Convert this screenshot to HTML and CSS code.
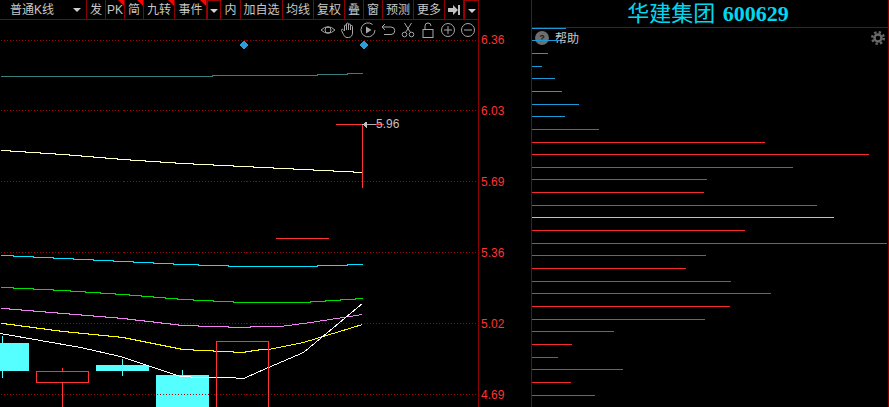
FILE: index.html
```html
<!DOCTYPE html>
<html lang="zh-CN">

<head>
    <meta charset="UTF-8">
    <title>华建集团 600629</title>
    <link rel="stylesheet" href="styles.css">
</head>

<body>
    <div class="screen">
        <!-- K line side -->
        <div class="kline">
            <div class="toolbar">
                <div class="tool tool-period">普通K线<i class="caret"></i></div>
                <div class="tool w19">发</div>
                <div class="tool w19 flag">PK</div>
                <div class="tool w19 flag">简</div>
                <div class="tool w31 flag">九转</div>
                <div class="tool w32 flag">事件</div>
                <div class="tool tool-drop w14"><i class="caret"></i></div>
                <div class="tool w20">内</div>
                <div class="tool w42">加自选</div>
                <div class="tool w31">均线</div>
                <div class="tool w31">复权</div>
                <div class="tool w19">叠</div>
                <div class="tool w19">窗</div>
                <div class="tool w31">预测</div>
                <div class="tool w31">更多</div>
                <div class="tool w19">
                    <svg width="14" height="12" viewBox="0 0 14 12">
                        <path class="fill-gray" d="M1 4H6V1L11 6L6 11V8H1ZM11 1H13V11H11Z" />
                    </svg>
                </div>
                <div class="tool tool-drop w15"><i class="caret"></i></div>
            </div>

            <div class="chart">
                <svg class="plot" width="478" height="387" viewBox="0 20 478 387">
                    <!-- filled candle bodies -->
                    <rect class="candle-up" x="0" y="343" width="29" height="28" />
                    <rect class="candle-up" x="96" y="365" width="53" height="6" />
                    <rect class="candle-up" x="156" y="375" width="53" height="32" />

                    <g transform="translate(.5 .5)">
                        <!-- grid -->
                        <path class="grid" d="M0 40H478M0 110H478M0 181H478M0 252H478M0 323H478M0 394H478" />

                        <!-- moving averages -->
                        <path class="ma ma-teal" d="M0 76H212V75H317V74H347V73H362" />
                        <path class="ma ma-cream" d="M0 150H10V151H25V152H40V153H55V154H69V155H81V156H93V157H105V158H117V159H130V160H145V161H160V162H175V163H193V164H213V165H233V166H253V167H273V168H293V169H313V170H333V171H353V172H362" />
                        <path class="ma ma-cyan" d="M0 255H13V256H33V257H53V258H73V259H93V260H113V261H133V262H153V263H173V264H198V265H228V266H317V265H347V264H362" />
                        <path class="ma ma-green" d="M0 287H13V288H33V289H53V290H70V291H85V292H100V293H115V294H129V295H141V296H153V297H165V298H177V299H193V300H213V301H233V302H310V301H325V300H340V299H355V298H362" />
                        <path class="ma ma-pink" d="M0 308H9V309H21V310H33V311H45V312H57V313H69V314H81V315H93V316H105V317H117V318H127V319H135V320H144V321H153V322H161V323H170V324H178V325H198V326H228V327H250V326H280L310 322L362 314" />
                        <path class="ma ma-yellow" d="M0 323H6V324H14V325H21V326H29V327H36V328H44V329H51V330H59V331H68V332H78V333H88V334H98V335H108V336H118V337H125V338H130V339H135V340H140V341H145V342H150V343H155V344H160V345H165V346H170V347H175V348H180V349H193V350H213V351H233V352H245V351H251V350H258V349H268L303 342L362 324" />
                        <path class="ma ma-white" d="M0 333L80 347L120 356L180 376L200 377H228L243 378L268 367L303 352L362 303" />

                        <!-- wicks and hollow candles -->
                        <path class="wick-up" d="M2 335V377M122 358V375M182 369V375" />
                        <path class="wick-down" d="M62 367V371M62 382V407" />
                        <rect class="candle-down" x="36" y="371" width="52" height="11" />
                        <rect class="candle-down" x="216" y="341" width="52" height="70" />
                        <path class="wick-down" d="M275.500 238H328.500M335.500 124H383M362 124V187" />

                        <!-- high mark -->
                        <path class="mark-line" d="M363 124H375" />
                        <path class="fill-gray" d="M362 124L366 121V127Z" />

                        <!-- diamonds -->
                        <path class="diamond" d="M243 40L247.500 44.500L243 49L238.500 44.500Z" />
                        <path class="diamond" d="M363 40L367.500 44.500L363 49L358.500 44.500Z" />
                    </g>
                    <text class="mark-text" x="376" y="128">5.96</text>
                </svg>

                <!-- drawing tools over the chart -->
                <div class="chart-tools">
                    <svg class="ico" viewBox="0 0 16 16">
                        <path d="M1 8Q8 1.500 15 8Q8 14.500 1 8Z" />
                        <circle cx="8" cy="8" r="3" />
                    </svg>
                    <svg class="ico" viewBox="0 0 16 16">
                        <path d="M4.500 9V4a1 1 0 0 1 2 0V8M6.500 8V2a1 1 0 0 1 2 0V8M8.500 8V3a1 1 0 0 1 2 0V8M10.500 8V4.500a1 1 0 0 1 2 0V11c0 2.500-1.500 4.500-4 4.500H7c-1.500 0-2.500-1-3.500-3L1.500 8.500c-.6-1 .8-1.800 1.500-1L4.500 9" />
                    </svg>
                    <svg class="ico" viewBox="0 0 16 16">
                        <path d="M12.500 2.500A7 7 0 1 0 15 8" />
                        <path class="solid" d="M6 4.500L11.500 8L6 11.500Z" />
                    </svg>
                    <svg class="ico" viewBox="0 0 16 16">
                        <path d="M5 2L2 5L5 8M2 5H11a3.500 3.500 0 0 1 0 7.500H4" />
                    </svg>
                    <svg class="ico" viewBox="0 0 16 16">
                        <circle cx="4.500" cy="12.500" r="2.300" />
                        <circle cx="11.500" cy="12.500" r="2.300" />
                        <path d="M5.500 10.500L11.500 1M10.500 10.500L4.500 1" />
                    </svg>
                    <svg class="ico" viewBox="0 0 16 16">
                        <rect x="3" y="7.500" width="10" height="8" />
                        <path d="M5 7.500V4a3 3 0 0 1 6 0" />
                    </svg>
                    <svg class="ico" viewBox="0 0 16 16">
                        <circle cx="8" cy="8" r="6.500" />
                        <path d="M4 8H12M8 4V12" />
                    </svg>
                    <svg class="ico" viewBox="0 0 16 16">
                        <circle cx="8" cy="8" r="6.500" />
                        <path d="M4 8H12" />
                    </svg>
                </div>
            </div>
        </div>

        <!-- price axis -->
        <div class="axis">
            <div class="price">6.36</div>
            <div class="price">6.03</div>
            <div class="price">5.69</div>
            <div class="price">5.36</div>
            <div class="price">5.02</div>
            <div class="price">4.69</div>
        </div>

        <!-- chip distribution -->
        <div class="panel">
            <div class="panel-title">华建集团 <span class="code">600629</span></div>
            <div class="panel-body">
                <div class="help-row">
                    <div class="help-icon">?</div>
                    <span class="help-text">帮助</span>
                    <svg class="gear" width="14" height="14" viewBox="0 0 14 14">
                        <circle class="gear-ring" cx="7" cy="7" r="3.500" />
                        <circle class="gear-teeth" cx="7" cy="7" r="5.800" />
                    </svg>
                </div>
                <div class="bars">
                    <div class="bar blue" style="width:34px"></div>
                    <div class="bar blue" style="width:28px"></div>
                    <div class="bar blue" style="width:16px"></div>
                    <div class="bar blue" style="width:10px"></div>
                    <div class="bar blue" style="width:23px"></div>
                    <div class="bar blue" style="width:30px"></div>
                    <div class="bar blue" style="width:47px"></div>
                    <div class="bar blue" style="width:33px"></div>
                    <div class="bar red" style="width:67px"></div>
                    <div class="bar red" style="width:233px"></div>
                    <div class="bar red" style="width:337px"></div>
                    <div class="bar red" style="width:261px"></div>
                    <div class="bar red" style="width:175px"></div>
                    <div class="bar red" style="width:172px"></div>
                    <div class="bar red" style="width:285px"></div>
                    <div class="bar gray" style="width:302px"></div>
                    <div class="bar red" style="width:213px"></div>
                    <div class="bar red" style="width:355px"></div>
                    <div class="bar red" style="width:174px"></div>
                    <div class="bar red" style="width:154px"></div>
                    <div class="bar red" style="width:199px"></div>
                    <div class="bar red" style="width:239px"></div>
                    <div class="bar red" style="width:198px"></div>
                    <div class="bar red" style="width:173px"></div>
                    <div class="bar red" style="width:82px"></div>
                    <div class="bar red" style="width:40px"></div>
                    <div class="bar red" style="width:26px"></div>
                    <div class="bar red" style="width:91px"></div>
                    <div class="bar red" style="width:39px"></div>
                    <div class="bar red" style="width:63px"></div>
                </div>
            </div>
        </div>
    </div>
</body>

</html>
```

FILE: styles.css
```css
/* page */
body {
    margin: 0;
    background: #000000;
    color: #c8c8c8;
    font-family: "Liberation Sans", "Noto Sans CJK SC", sans-serif;
    font-size: 12px;
    overflow: hidden;
}

.screen {
    display: flex;
    width: 889px;
    height: 407px;
}

/* left side */
.kline {
    width: 478px;
    border-right: 1px solid #8b0000;
    display: flex;
    flex-direction: column;
}

/* toolbar */
.toolbar {
    display: flex;
    height: 19px;
    border-bottom: 1px solid #8b0000;
}

.tool {
    position: relative;
    box-sizing: border-box;
    flex: none;
    display: flex;
    align-items: center;
    justify-content: center;
    height: 19px;
    padding-top: 1px;
    border-right: 1px solid #8b0000;
    line-height: 19px;
}

.tool-period {
    width: 87px;
    justify-content: flex-start;
    padding-left: 10px;
}

.tool-period .caret {
    margin-left: 19px;
}

.tool-drop {
    border: 1px solid #a00000;
    border-bottom: none;
}

.w14 { width: 14px; }
.w15 { width: 15px; border-right: none; }
.w19 { width: 19px; }
.w20 { width: 20px; }
.w31 { width: 31px; }
.w32 { width: 32px; }
.w42 { width: 42px; }

/* little white arrow */
.caret {
    width: 0;
    height: 0;
    border-left: 4px solid transparent;
    border-right: 4px solid transparent;
    border-top: 4px solid #d0d0d0;
}

/* red corner */
.flag::after {
    content: "";
    position: absolute;
    top: 0;
    right: 0;
    border-top: 6px solid #ff0000;
    border-left: 6px solid transparent;
}

/* chart */
.chart {
    position: relative;
    flex: 1;
}

.plot {
    display: block;
}

.plot path,
.plot rect {
    shape-rendering: crispEdges;
}

.grid {
    fill: none;
    stroke: #a00000;
    stroke-dasharray: 1 2;
}

.ma {
    fill: none;
    stroke-width: 1;
}

.ma-teal { stroke: #3a7f80; }
.ma-cream { stroke: #ffffc0; }
.ma-cyan { stroke: #00e5ff; }
.ma-green { stroke: #00e000; }
.ma-pink { stroke: #f080f0; }
.ma-yellow { stroke: #ffff00; }
.ma-white { stroke: #ffffff; }

.candle-up { fill: #55ffff; }
.wick-up { fill: none; stroke: #55ffff; }
.candle-down { fill: none; stroke: #ff3333; }
.wick-down { fill: none; stroke: #ff3333; }

.mark-line {
    fill: none;
    stroke: #b0b0b0;
}

.mark-text {
    fill: #c0c0c0;
    font-size: 12px;
}

.fill-gray { fill: #c0c0c0; }

.diamond { fill: #2a9fd6; }

/* icons on the chart */
.chart-tools {
    position: absolute;
    top: 2px;
    right: 0;
    display: flex;
}

.ico {
    width: 16px;
    height: 16px;
    padding: 0 2px;
    fill: none;
    stroke: #a8a8a8;
    stroke-width: 1;
}

.ico .solid {
    fill: #a8a8a8;
    stroke: none;
}

/* price axis */
.axis {
    box-sizing: border-box;
    width: 53px;
    padding: 33px 0 0 2px;
    border-right: 1px solid #8b0000;
}

.price {
    height: 14px;
    margin-bottom: 57px;
    line-height: 14px;
    color: #ff3333;
}

/* right side */
.panel {
    box-sizing: border-box;
    width: 357px;
    border-right: 1px solid #8b0000;
}

.panel-title {
    height: 27px;
    padding-right: 4px;
    border-bottom: 1px solid #8b0000;
    display: flex;
    align-items: center;
    justify-content: center;
    gap: 2px;
    color: #00d8f0;
    font-family: "Liberation Serif", "Noto Sans CJK SC", serif;
    font-size: 22px;
    line-height: 27px;
    white-space: pre;
}

.code {
    font-weight: bold;
}

.panel-body {
    position: relative;
}

/* sits under the bars */
.help-row {
    position: absolute;
    top: 2px;
    left: 3px;
    right: 3px;
    height: 16px;
    display: flex;
    align-items: center;
    gap: 6px;
}

.help-text {
    margin-top: -1px;
}

.help-icon {
    width: 14px;
    height: 14px;
    border-radius: 50%;
    background: #6e6e6e;
    color: #1a1a1a;
    font-size: 9px;
    font-weight: bold;
    line-height: 14px;
    text-align: center;
}

.gear {
    margin-left: auto;
}

.gear-ring {
    fill: none;
    stroke: #686868;
    stroke-width: 2.500;
}

.gear-teeth {
    fill: none;
    stroke: #686868;
    stroke-width: 2.400;
    stroke-dasharray: 2.300 2.255;
}

/* chip bars */
.bars {
    position: relative;
    margin-top: -0.4px;
}

.bar {
    height: 1px;
    margin-bottom: 11.667px;
}

.blue { background: #1c9ad6; }
.red { background: #f52a2a; }
.gray { background: #c0c0c0; }
```
